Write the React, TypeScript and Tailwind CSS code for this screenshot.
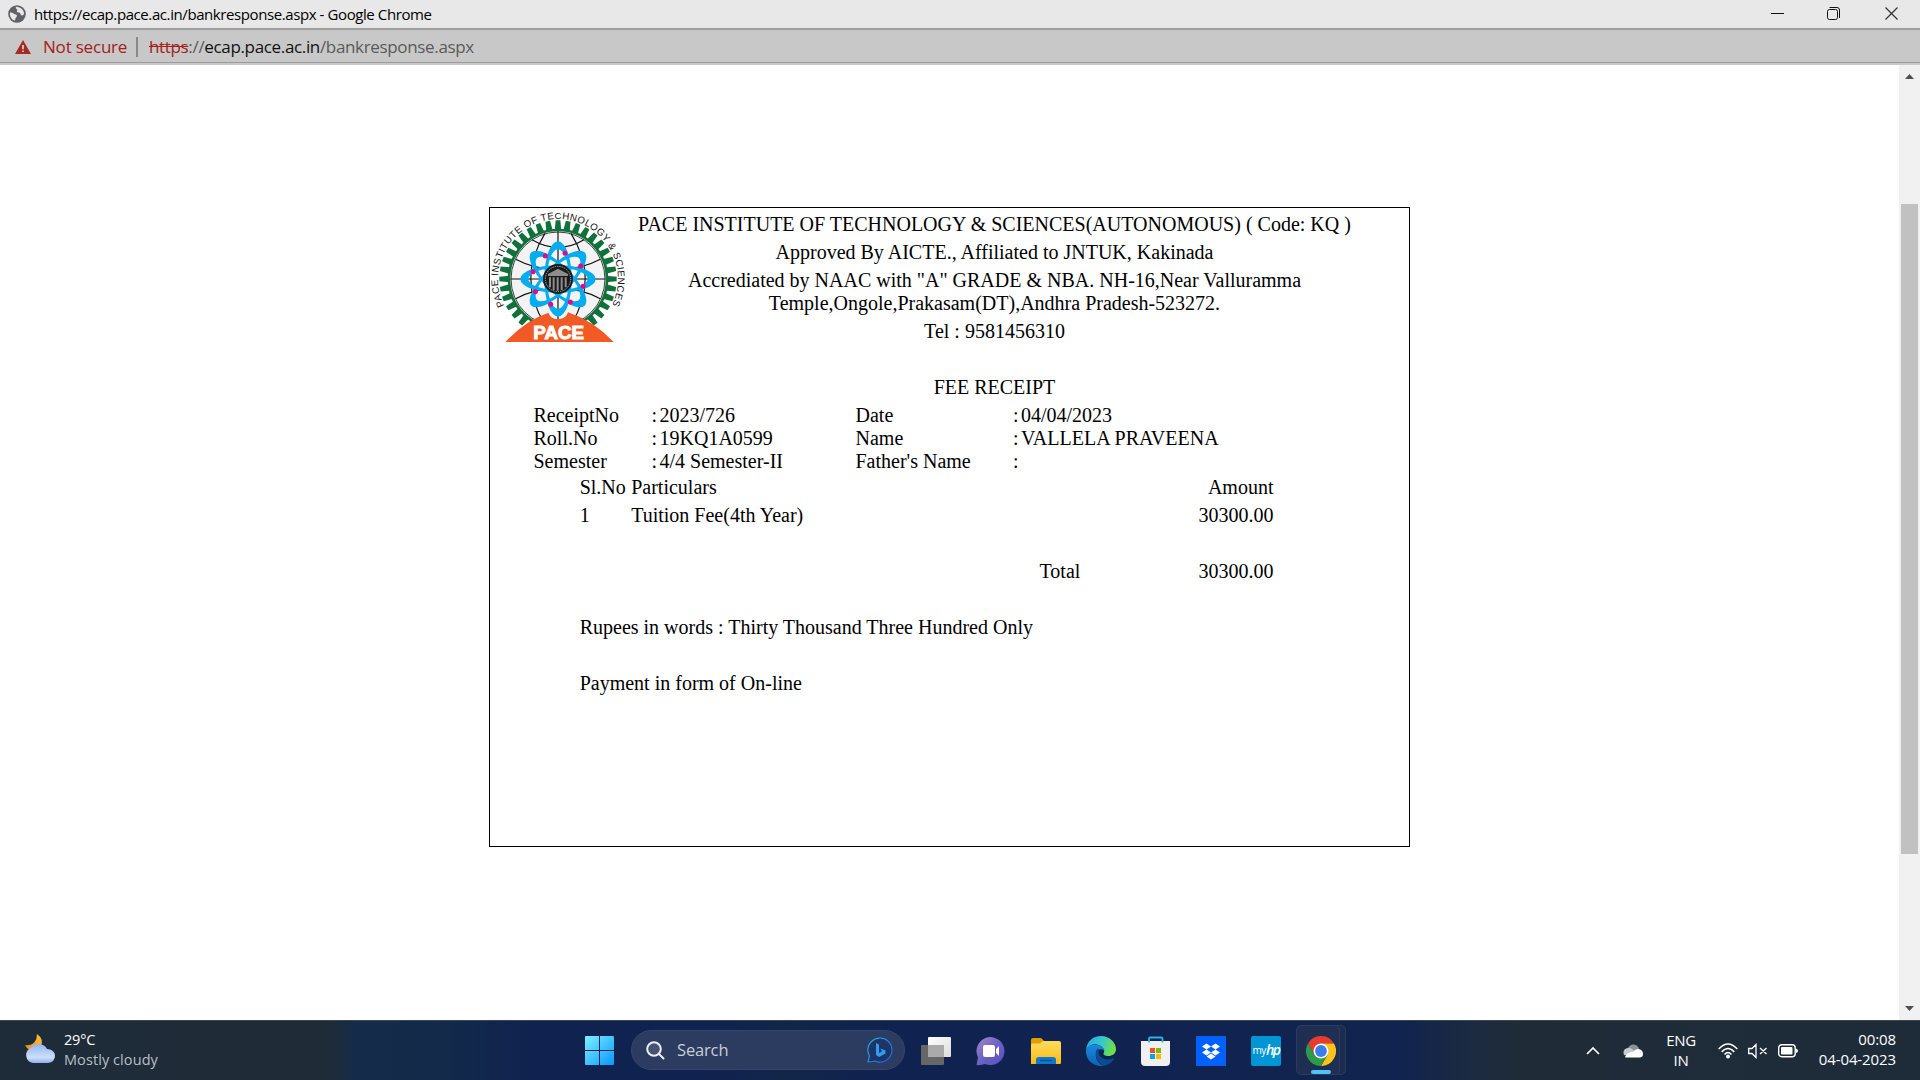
import React from "react";

const segoe = "font-['Open_Sans','Noto_Sans',sans-serif]";

const teeth = Array.from({ length: 36 }, (_, i) => i * 10);
const dots = [
  [196, 168], [255, 160], [302, 198], [309, 259],
  [271, 306], [212, 313], [166, 275], [159, 215],
];

function PaceLogo() {
  return (
    <svg width="140" height="142" viewBox="30 24 420 426" className="block shrink-0">
      <defs>
        <path id="ring" d="M72.600 316.700 A180 180 0 1 1 395.400 316.700" fill="none" />
      </defs>
      {teeth.map((a) => (
        <path key={a} d="M224 94 L227 61 L241 61 L244 94 Z" fill="#10713a" transform={`rotate(${a} 234 237)`} />
      ))}
      <circle cx="234" cy="237" r="147" fill="#f3f3f4" stroke="#10713a" strokeWidth="8" />
      <circle cx="234" cy="237" r="141" fill="none" stroke="#1c1c1c" strokeWidth="2.5" />
      <g fill="none" stroke="#111" strokeWidth="3.5">
        <path d="M234 94V380M92 237H376M156 119Q234 165 312 119M107 178Q165 209 234 209Q303 209 361 178M107 296Q165 265 234 265Q303 265 361 296" />
        <path d="M195 100Q110 237 195 374M273 100Q358 237 273 374" />
      </g>
      {[0, 45, 90, 135].map((a) => (
        <path
          key={a}
          transform={`rotate(${a} 234 237)`}
          fill="#00adee"
          fillRule="evenodd"
          d="M121 237A113 41 0 1 1 347 237A113 41 0 1 1 121 237ZM145 237A89 33 0 1 0 323 237A89 33 0 1 0 145 237Z"
        />
      ))}
      <circle cx="234" cy="237" r="45" fill="#191919" />
      <circle cx="234" cy="237" r="38" fill="none" stroke="#b5b5b5" strokeWidth="3" strokeDasharray="4 3" />
      <path d="M204 222L234 206L264 222V228H204ZM207 232H213V262H207ZM218 232H224V270H218ZM230 232H236V272H230ZM242 232H248V270H242ZM254 232H260V262H254Z" fill="#8d8d8d" />
      {dots.map(([x, y]) => (
        <circle key={x} cx={x} cy={y} r="7.5" fill="#ec008c" />
      ))}
      <path d="M76 426Q135 362 205 338Q213 358 234 357Q258 358 264 337Q340 362 401 426Z" fill="#f15a24" />
      <text x="236" y="416" textAnchor="middle" textLength="152" lengthAdjust="spacingAndGlyphs" fontFamily="Liberation Sans" fontWeight="900" fontSize="56" fill="#fff" stroke="#fff" strokeWidth="3">PACE</text>
      <text fontFamily="Liberation Sans" fontSize="29" fill="#111">
        <textPath href="#ring" textLength="728" lengthAdjust="spacing">PACE INSTITUTE OF TECHNOLOGY &amp; SCIENCES</textPath>
      </text>
    </svg>
  );
}

function TitleBar() {
  return (
    <div className="flex h-[28px] items-center bg-[#e8e8e8] pl-[8px] text-black">
      <svg width="18" height="18" viewBox="0 0 18 18">
        <circle cx="9" cy="9" r="8.8" fill="#5f6368" />
        <path d="M2 7.500C5 7 6 9.500 8 9.500C9 10 9.500 11 8 12.500C7 13.500 7.500 14.500 7 15.500C4 15 1.500 12 2 7.500ZM8 1.800C7 3.500 9 4 9.500 5C8 6 9 7.500 11 7.500C13 8 12 10 14 10.500C15.500 10.500 16 9 16 8C15.500 5 13 2 8 1.800Z" fill="#e8e8e8" />
      </svg>
      <span className="ml-[8px] whitespace-nowrap text-[15px] leading-[20px] tracking-[-0.41px]">https://ecap.pace.ac.in/bankresponse.aspx - Google Chrome</span>
      <svg className="ml-auto" width="150" height="28" viewBox="0 0 150 28" fill="none" stroke="#111">
        <path d="M1 13.500H14" />
        <rect x="57.500" y="9.500" width="10" height="10" rx="2" />
        <path d="M59.500 7.500H67Q69.500 7.500 69.500 10V18" />
        <path d="M115.500 7.500L127.500 19.500M127.500 7.500L115.500 19.500" stroke="#333" strokeWidth="1.2" />
      </svg>
    </div>
  );
}

function AddressBar() {
  return (
    <div className="flex h-[37px] flex-col border-t-2 border-[#9f9f9f] bg-[#c8c8c8]">
      <div className="flex h-[32px] items-center pl-[15px] pt-px text-[17px] leading-[24px]">
        <svg width="16" height="14" viewBox="0 0 16 14">
          <path d="M8 0L16 14H0Z" fill="#a52a23" />
          <path d="M7.200 5H8.800V9.200H7.200ZM7.200 10.400H8.800V12H7.200Z" fill="#ddd" />
        </svg>
        <span className="ml-[12px] w-[84px] whitespace-nowrap tracking-[-0.2px] text-[#a3211b]">Not secure</span>
        <span className="ml-[9px] h-[20px] w-[2px] bg-[#8a8a8a]" />
        <span className="ml-[11px] whitespace-nowrap tracking-[-0.34px] text-[#5a5a5a]">
          <span className="text-[#a3211b] line-through">https</span>://<span className="text-[#111]">ecap.pace.ac.in</span>/bankresponse.aspx
        </span>
      </div>
      <div className="h-px bg-[#9a9a9a]" />
    </div>
  );
}

const details = [
  ["ReceiptNo", "2023/726", "Date", "04/04/2023"],
  ["Roll.No", "19KQ1A0599", "Name", "VALLELA PRAVEENA"],
  ["Semester", "4/4 Semester-II", "Father's Name", ""],
];

function Receipt() {
  return (
    <div className="mt-[142px] ml-[489px] flex h-[640px] w-[921px] flex-col border border-black font-['Liberation_Serif',serif] text-[20px] leading-[23px] whitespace-nowrap text-black">
      <div className="flex h-[191px]">
        <PaceLogo />
        <div className="flex w-[729px] shrink-0 flex-col items-center gap-[5px] pt-[5px] text-center">
          <p>PACE INSTITUTE OF TECHNOLOGY &amp; SCIENCES(AUTONOMOUS) ( Code: KQ )</p>
          <p>Approved By AICTE., Affiliated to JNTUK, Kakinada</p>
          <p>Accrediated by NAAC with "A" GRADE &amp; NBA. NH-16,Near Valluramma<br />Temple,Ongole,Prakasam(DT),Andhra Pradesh-523272.</p>
          <p>Tel : 9581456310</p>
          <p className="mt-[28px]">FEE RECEIPT</p>
        </div>
      </div>
      <div className="mt-[5px] ml-[43.500px] grid grid-cols-[118px_8px_196px_157.500px_8px_auto]">
        {details.map(([a, b, c, d]) => (
          <React.Fragment key={a}>
            <span>{a}</span><span>:</span><span>{b}</span><span>{c}</span><span>:</span><span>{d}</span>
          </React.Fragment>
        ))}
      </div>
      <div className="mt-[3px] ml-[89.700px] grid w-[693.800px] grid-cols-[51.500px_408.500px_1fr] gap-y-[5px]">
        <span>Sl.No</span><span>Particulars</span><span className="text-right">Amount</span>
        <span>1</span><span>Tuition Fee(4th Year)</span><span className="text-right">30300.00</span>
      </div>
      <div className="mt-[33px] ml-[549.500px] flex w-[234px] justify-between">
        <span>Total</span><span>30300.00</span>
      </div>
      <p className="mt-[33px] ml-[89.700px]">Rupees in words : Thirty Thousand Three Hundred Only</p>
      <p className="mt-[33px] ml-[89.700px]">Payment in form of On-line</p>
    </div>
  );
}

function Scrollbar() {
  return (
    <div className="flex w-[21px] flex-col items-center bg-[#f1f1f1]">
      <svg width="21" height="139" viewBox="0 0 21 139"><path d="M10.500 9L15 14H6Z" fill="#505050" /></svg>
      <div className="h-[650px] w-[17px] bg-[#c1c1c1]" />
      <svg className="mt-auto" width="21" height="20" viewBox="0 0 21 20"><path d="M10.500 11L15 6H6Z" fill="#505050" /></svg>
    </div>
  );
}

function Slot({ children }: { children: React.ReactNode }) {
  return <div className="flex w-[55px] shrink-0 items-center justify-center">{children}</div>;
}

function Taskbar() {
  return (
    <div className={`${segoe} flex h-[60px] border-t border-[#3a4753] bg-[linear-gradient(90deg,#1e2b39_0px,#1f2c37_330px,#142b49_355px,#132a4a_440px,#10224f_540px,#10224f_700px,#122649_790px,#10224f_880px,#11234f_1400px,#1b2a3f_1470px,#1f2c38_1520px,#1e2b39_1920px)] text-white`}>
      <div className="flex w-[571.500px] shrink-0 pl-[25px]">
        <svg className="mt-[13px]" width="30" height="30" viewBox="0 0 30 30">
          <defs>
            <linearGradient id="moon" x1="1" y1="0" x2="0" y2="1"><stop stopColor="#f8c332" /><stop offset="1" stopColor="#f08a24" /></linearGradient>
            <linearGradient id="cloud" x1="0" y1="0" x2="0" y2="1"><stop stopColor="#8fb4f2" /><stop offset=".7" stopColor="#cfdff8" /><stop offset="1" stopColor="#8fb0ee" /></linearGradient>
          </defs>
          <path d="M12 0Q19 5 16 12Q12 18 5 16Q1 14 0 11Q6 12 9.500 8Q12 5 12 0Z" fill="url(#moon)" />
          <path d="M8 29A8 8 0 0 1 5.500 14Q9 10 14 10Q20 10.500 22 15Q29 15 30 21.500Q30 28 23 29Z" fill="url(#cloud)" />
        </svg>
        <div className="ml-[9px] pt-[9px] text-[14.500px] leading-[20px]">
          <p className="tracking-[-0.200px]">29°C</p>
          <p className="tracking-[0.080px] text-[#b9bfc6]">Mostly cloudy</p>
        </div>
      </div>

      <Slot>
        <svg width="29" height="29" viewBox="0 0 29 29">
          <defs><linearGradient id="win" x1="0" y1="0" x2="1" y2="1"><stop stopColor="#7cf0ff" /><stop offset="1" stopColor="#0a96ff" /></linearGradient></defs>
          <path d="M0 1Q0 0 1 0H14V14H0ZM15 0H28Q29 0 29 1V14H15ZM0 15H14V29H1Q0 29 0 28ZM15 15H29V28Q29 29 28 29H15Z" fill="url(#win)" />
        </svg>
      </Slot>

      <div className="mt-[9px] ml-[4.500px] flex h-[40px] w-[274px] shrink-0 items-center rounded-full border border-[#35456b] bg-[#2c3c60] pl-[14px] pr-[11px]">
        <svg width="19" height="19" viewBox="0 0 19 19" fill="none" stroke="#eceef2" strokeWidth="2">
          <circle cx="8" cy="8" r="6.800" fill="#465375" /><path d="M13 13L17.500 17.500" strokeLinecap="round" />
        </svg>
        <span className="ml-[12px] text-[16.500px] leading-[22px] tracking-[-0.150px] text-[#c9cdd6]">Search</span>
        <svg className="ml-auto" width="26" height="26" viewBox="0 0 26 26">
          <defs><linearGradient id="bing" x1="0" y1="0" x2="1" y2="1"><stop stopColor="#22b9e8" /><stop offset="1" stopColor="#2455e0" /></linearGradient></defs>
          <path d="M1 25L2.500 19A12 12 0 1 1 8 24Q4 25 1 25Z" fill="#1c3566" stroke="url(#bing)" strokeWidth="1.200" />
          <path d="M9 6L12 7.500V16L15 14.500L13.500 11.500L18.500 13.500V16.500L12 20L9 18Z" fill="#2f9bf2" />
        </svg>
      </div>

      <div className="ml-[3.500px] flex">
        <Slot>
          <svg width="30" height="30" viewBox="0 0 30 30">
            <defs><linearGradient id="tv" x1="0" y1="0" x2="1" y2="1"><stop stopColor="#fff" /><stop offset="1" stopColor="#dcdcdc" /></linearGradient></defs>
            <rect x="0" y="9" width="23" height="20" rx="1" fill="#676767" />
            <rect x="7" y="1" width="23" height="20" rx="1" fill="url(#tv)" />
            <path d="M7 9H23V21H8Q7 21 7 20Z" fill="#aaa" />
          </svg>
        </Slot>
        <Slot>
          <svg width="30" height="30" viewBox="0 0 30 30">
            <defs><linearGradient id="chat" x1="0" y1="0" x2="1" y2="1"><stop stopColor="#a18ac4" /><stop offset=".5" stopColor="#6c62c4" /><stop offset="1" stopColor="#5350c0" /></linearGradient></defs>
            <path d="M0.500 29L2 21.500A14 14 0 1 1 9 28Q5 29.500 0.500 29Z" fill="url(#chat)" />
            <rect x="7" y="9" width="12" height="12" rx="2" fill="#fff" />
            <path d="M20 13L23 10V20L20 17Z" fill="#fff" />
          </svg>
        </Slot>
        <Slot>
          <svg width="30" height="30" viewBox="0 0 30 30">
            <defs><linearGradient id="folder" x1="0" y1="0" x2="0" y2="1"><stop stopColor="#ffdc5f" /><stop offset="1" stopColor="#fbb915" /></linearGradient></defs>
            <path d="M0 4Q0 2 2 2H9Q11 2 12 4L14 6V12H0Z" fill="#e09e08" />
            <path d="M0 9Q0 7.500 1 7.500H9L12 5H28Q30 5 30 7V27Q30 28 29 28H0Z" fill="url(#folder)" />
            <path d="M5 28V24Q5 21 8 21H22Q25 21 25 24V28Z" fill="#0f78c9" />
            <path d="M9 24.500H21" stroke="#08509a" strokeWidth="1.400" />
          </svg>
        </Slot>
        <Slot>
          <svg width="30" height="30" viewBox="0 0 30 30">
            <defs>
              <linearGradient id="e1" x1="0" y1="0" x2="1" y2="0.300"><stop stopColor="#23a6e2" /><stop offset=".55" stopColor="#36c7cf" /><stop offset="1" stopColor="#6be04c" /></linearGradient>
              <linearGradient id="e2" x1="0" y1="0" x2="0" y2="1"><stop stopColor="#1a8ade" /><stop offset="1" stopColor="#0c62b4" /></linearGradient>
            </defs>
            <path d="M0 14C1 5 7 0 15 0C24 0 30 7 30 13C30 18 26 20 22.500 20C19 20 17 18.500 17.500 17.500C19 16 18.500 10 11 8.500C6 7.500 2 10 0 14Z" fill="url(#e1)" />
            <path d="M0 14C2 10 5 8.500 9 8.500C15 8.500 19 12 18.500 15.500C17.500 12.500 11 12 10 18C9 24 14 29 18 29.700C8 31.500 -1 24 0 14Z" fill="url(#e2)" />
            <path d="M11.500 12.500C8 16 9 25 18 29.700C23 29 26 26 28 23C28.500 22 27.500 22 26.500 22.500C19 25.500 11 21 13 14Q13 12.500 11.500 12.500Z" fill="#0b4a94" />
          </svg>
        </Slot>
        <Slot>
          <svg width="30" height="30" viewBox="0 0 30 30">
            <path d="M8 6V2.500Q8 1.500 9 1.500H20Q21.500 1.500 21.500 2.500V6" fill="none" stroke="#27b5ee" strokeWidth="1.800" />
            <path d="M0 5H29V26Q29 30 25 30H4Q0 30 0 26Z" fill="#f0f0f0" />
            <path d="M8 5V6.500M21.500 5V6.500" stroke="#27b5ee" strokeWidth="1.800" />
            <path d="M9 12H14V17H9Z" fill="#f25022" /><path d="M15 12H20V17H15Z" fill="#7fba00" />
            <path d="M9 18H14V23H9Z" fill="#00a4ef" /><path d="M15 18H20V23H15Z" fill="#ffb900" />
          </svg>
        </Slot>
        <Slot>
          <svg width="30" height="30" viewBox="0 0 30 30">
            <rect width="30" height="30" fill="#0061fe" />
            <path d="M10.500 7.500L15 10.500L10.500 13.500L6 10.500ZM19.500 7.500L24 10.500L19.500 13.500L15 10.500ZM10.500 13.500L15 16.500L10.500 19.500L6 16.500ZM19.500 13.500L24 16.500L19.500 19.500L15 16.500ZM15 17.600L19.500 20.500L15 23.500L10.500 20.500Z" fill="#fff" />
          </svg>
        </Slot>
        <Slot>
          <div className="flex h-[30px] w-[30px] items-center justify-center rounded-[2px] bg-[#0096d6] pb-px whitespace-nowrap">
            <span className="text-[10px] leading-[14px] tracking-[-0.500px]">my</span>
            <span className="text-[14px] leading-[14px] font-semibold tracking-[-1.500px] italic">hp</span>
          </div>
        </Slot>
        <div className="relative flex w-[55px] items-center justify-center">
          <div className="absolute top-[4px] left-[12.500px] h-[50px] w-[40px] rounded-[5px] border border-[#2c3b5c] bg-[#1b2c50]" />
          <div className="absolute top-[4px] left-[2.500px] h-[50px] w-[44px] rounded-[5px] border border-[#2c3b5c] bg-[#1e2f52]" />
          <svg className="relative" width="30" height="30" viewBox="0 0 30 30">
            <path d="M2 7.500A15 15 0 0 1 28 7.500H15L8.500 18.750Z" fill="#e93a2e" />
            <path d="M28 7.500A15 15 0 0 1 15 30L21.500 18.750L15 7.500Z" fill="#fcc31e" />
            <path d="M15 30A15 15 0 0 1 2 7.500L8.500 18.750L21.500 18.750Z" fill="#2c9a48" />
            <circle cx="15" cy="15" r="7.500" fill="#fff" /><circle cx="15" cy="15" r="5.900" fill="#3b7ded" />
          </svg>
          <div className="absolute top-[49px] left-[17.500px] h-[4px] w-[20px] rounded-full bg-[#4cc2ff]" />
        </div>
      </div>

      <div className="ml-auto flex items-center">
        <svg width="14" height="9" viewBox="0 0 14 9" fill="none" stroke="#fff" strokeWidth="1.700"><path d="M1 8L7 2L13 8" /></svg>
        <svg className="ml-[23px]" width="20" height="14" viewBox="0 0 20 14">
          <path d="M5 4Q7 0 11 0.500Q15 1 16 5L12 9H4Z" fill="#8b9299" />
          <path d="M1 11Q-1 5 5 4Q9 3.500 12 8L8 12Z" fill="#c6cacd" />
          <path d="M2 13Q4 8 10 8Q12 5 16 5Q20 6 20 10Q20 13 17 13.500H4Q2 13.500 2 13Z" fill="#fff" />
        </svg>
        <div className="ml-[22px] w-[32px] pb-px text-center text-[15px] leading-[20px] tracking-[-0.300px]"><p>ENG</p><p>IN</p></div>
        <svg className="ml-[21px]" width="20" height="16" viewBox="0 0 20 16" fill="none" stroke="#fff" strokeWidth="1.500">
          <path d="M0.700 6Q10 -4 19.300 6M3.700 9Q10 2 16.300 9M6.500 11.500Q10 7.500 13.500 11.500" /><circle cx="10" cy="13.500" r="2" fill="#fff" stroke="none" />
        </svg>
        <svg className="ml-[10px]" width="20" height="16" viewBox="0 0 20 16" fill="none" stroke="#fff" strokeWidth="1.300">
          <path d="M0.700 5.500H4L8 1.500V14.500L4 10.500H0.700ZM12 5L18.500 11M18.500 5L12 11" />
        </svg>
        <svg className="ml-[10px]" width="20" height="14" viewBox="0 0 20 14">
          <rect x=".7" y=".7" width="16.500" height="12" rx="3" fill="none" stroke="#fff" strokeWidth="1.400" />
          <rect x="3" y="3" width="11.500" height="7.500" rx="1" fill="#fff" /><path d="M18 4.500Q20 5 20 7Q20 8.500 18 9Z" fill="#fff" />
        </svg>
        <div className="mr-[24px] w-[98px] pb-[3px] whitespace-nowrap text-right text-[15px] leading-[20px] tracking-[-0.100px]"><p>00:08</p><p>04-04-2023</p></div>
      </div>
    </div>
  );
}

export default function App() {
  return (
    <div className={`${segoe} flex h-[1080px] w-[1920px] flex-col overflow-hidden bg-white`}>
      <TitleBar />
      <AddressBar />
      <div className="flex h-[955px]">
        <div className="flex-1"><Receipt /></div>
        <Scrollbar />
      </div>
      <Taskbar />
    </div>
  );
}
